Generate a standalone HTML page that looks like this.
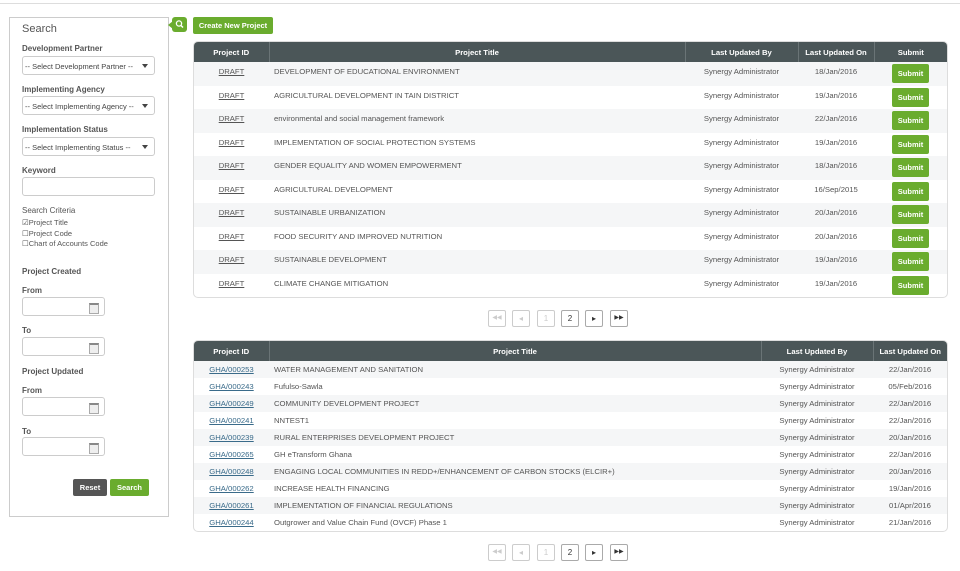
<!DOCTYPE html>
<html><head><meta charset="utf-8"><style>
*{box-sizing:border-box;margin:0;padding:0}
body{width:960px;height:571px;background:#fff;font-family:"Liberation Sans",Arial,sans-serif;color:#444;position:relative;overflow:hidden;font-size:8px}
.a{position:absolute}
.topline{left:0;top:3px;width:960px;height:1px;background:#ddd}
.panel{left:9px;top:17px;width:160px;height:500px;border:1px solid #ccc}
.lbl{font-weight:bold;font-size:8px;color:#555}
.sel{width:133px;height:19px;border:1px solid #ccc;border-radius:3px;font-size:7.5px;padding:5px 0 0 2px;color:#444}
.sel:after{content:"";position:absolute;right:6px;top:7px;border-left:3px solid transparent;border-right:3px solid transparent;border-top:4px solid #444}
.inp{width:133px;height:19px;border:1px solid #ccc;border-radius:3px}
.dt{width:83px;height:19px;border:1px solid #ccc;border-radius:3px}
.dt:after{content:"";position:absolute;right:5px;top:5px;width:8px;height:8px;border:1px solid #aaa;border-top:2px solid #888;background:#eee}
.btn{color:#fff;font-weight:bold;font-size:7.5px;text-align:center;border-radius:2px}
.g{background:#6aac2e}
table{border-collapse:collapse;width:100%;font-size:7.7px}
th{background:#4b5658;color:#fff;font-weight:bold;height:20px;border-right:1px solid #6a7476}
th:last-child{border-right:none}
td{color:#555}
tr:nth-child(even) td{background:#f5f6f7}
.t1 td{height:23.5px}
.t1 td span.x{position:relative;top:-2px}
.t2 td{height:17px}
.tb{left:193px;width:755px;border:1px solid #ddd;border-radius:5px;overflow:hidden}
u{color:#555}
.t2 u{color:#3a6b8a}
.sb{display:inline-block;background:#6aac2e;color:#fff;font-weight:bold;font-size:7.5px;padding:5px 0;width:37px;text-align:center;border-radius:2px}
.pg{width:18px;height:17px;border:1px solid #ccc;border-radius:2px;font-size:8px;text-align:center;line-height:15px;color:#ccc}
.pg.on{color:#333;border-color:#aaa}
</style></head><body>
<div class="a topline"></div>
<div class="a panel"></div>
<div class="a" style="left:22px;top:23px;font-size:11px;color:#555">Search</div>
<div class="a lbl" style="left:22px;top:44px">Development Partner</div>
<div class="a sel" style="left:22px;top:56px">-- Select Development Partner --</div>
<div class="a lbl" style="left:22px;top:85px">Implementing Agency</div>
<div class="a sel" style="left:22px;top:96px">-- Select Implementing Agency --</div>
<div class="a lbl" style="left:22px;top:125px">Implementation Status</div>
<div class="a sel" style="left:22px;top:137px">-- Select Implementing Status --</div>
<div class="a lbl" style="left:22px;top:166px">Keyword</div>
<div class="a inp" style="left:22px;top:177px"></div>
<div class="a" style="left:22px;top:206px;font-size:8px;color:#555">Search Criteria</div>
<div class="a" style="left:22px;top:218px;font-size:7.5px;line-height:10.5px;color:#555">☑Project Title<br>☐Project Code<br>☐Chart of Accounts Code</div>
<div class="a lbl" style="left:22px;top:267px">Project Created</div>
<div class="a lbl" style="left:22px;top:286px">From</div>
<div class="a dt" style="left:22px;top:297px"></div>
<div class="a lbl" style="left:22px;top:326px">To</div>
<div class="a dt" style="left:22px;top:337px"></div>
<div class="a lbl" style="left:22px;top:367px">Project Updated</div>
<div class="a lbl" style="left:22px;top:386px">From</div>
<div class="a dt" style="left:22px;top:397px"></div>
<div class="a lbl" style="left:22px;top:427px">To</div>
<div class="a dt" style="left:22px;top:437px"></div>
<div class="a btn" style="left:73px;top:479px;width:34px;height:17px;line-height:17px;background:#555">Reset</div>
<div class="a btn g" style="left:110px;top:479px;width:39px;height:17px;line-height:17px">Search</div>
<div class="a g" style="left:172px;top:17px;width:15px;height:15px;border-radius:3px"><svg width="15" height="15" viewBox="0 0 15 15"><circle cx="7" cy="6.5" r="2.6" fill="none" stroke="#fff" stroke-width="1.3"/><line x1="8.9" y1="8.4" x2="11" y2="10.5" stroke="#fff" stroke-width="1.5"/></svg></div>
<div class="a" style="left:168px;top:21px;border-top:4px solid transparent;border-bottom:4px solid transparent;border-right:5px solid #6aac2e"></div>
<div class="a btn g" style="left:193px;top:17px;width:80px;height:17px;line-height:17px">Create New Project</div>

<div class="a tb" style="top:41px">
<table class="t1">
<tr><th style="width:75px">Project ID</th><th style="width:416px">Project Title</th><th style="width:113px">Last Updated By</th><th style="width:76px">Last Updated On</th><th>Submit</th></tr>
<tr><td align=center><span class="x"><u>DRAFT</u></span></td><td style="padding-left:5px"><span class="x">DEVELOPMENT OF EDUCATIONAL ENVIRONMENT</span></td><td align=center><span class="x">Synergy Administrator</span></td><td align=center><span class="x">18/Jan/2016</span></td><td align=center><span class="sb">Submit</span></td></tr>
<tr><td align=center><span class="x"><u>DRAFT</u></span></td><td style="padding-left:5px"><span class="x">AGRICULTURAL DEVELOPMENT IN TAIN DISTRICT</span></td><td align=center><span class="x">Synergy Administrator</span></td><td align=center><span class="x">19/Jan/2016</span></td><td align=center><span class="sb">Submit</span></td></tr>
<tr><td align=center><span class="x"><u>DRAFT</u></span></td><td style="padding-left:5px"><span class="x">environmental and social management framework</span></td><td align=center><span class="x">Synergy Administrator</span></td><td align=center><span class="x">22/Jan/2016</span></td><td align=center><span class="sb">Submit</span></td></tr>
<tr><td align=center><span class="x"><u>DRAFT</u></span></td><td style="padding-left:5px"><span class="x">IMPLEMENTATION OF SOCIAL PROTECTION SYSTEMS</span></td><td align=center><span class="x">Synergy Administrator</span></td><td align=center><span class="x">19/Jan/2016</span></td><td align=center><span class="sb">Submit</span></td></tr>
<tr><td align=center><span class="x"><u>DRAFT</u></span></td><td style="padding-left:5px"><span class="x">GENDER EQUALITY AND WOMEN EMPOWERMENT</span></td><td align=center><span class="x">Synergy Administrator</span></td><td align=center><span class="x">18/Jan/2016</span></td><td align=center><span class="sb">Submit</span></td></tr>
<tr><td align=center><span class="x"><u>DRAFT</u></span></td><td style="padding-left:5px"><span class="x">AGRICULTURAL DEVELOPMENT</span></td><td align=center><span class="x">Synergy Administrator</span></td><td align=center><span class="x">16/Sep/2015</span></td><td align=center><span class="sb">Submit</span></td></tr>
<tr><td align=center><span class="x"><u>DRAFT</u></span></td><td style="padding-left:5px"><span class="x">SUSTAINABLE URBANIZATION</span></td><td align=center><span class="x">Synergy Administrator</span></td><td align=center><span class="x">20/Jan/2016</span></td><td align=center><span class="sb">Submit</span></td></tr>
<tr><td align=center><span class="x"><u>DRAFT</u></span></td><td style="padding-left:5px"><span class="x">FOOD SECURITY AND IMPROVED NUTRITION</span></td><td align=center><span class="x">Synergy Administrator</span></td><td align=center><span class="x">20/Jan/2016</span></td><td align=center><span class="sb">Submit</span></td></tr>
<tr><td align=center><span class="x"><u>DRAFT</u></span></td><td style="padding-left:5px"><span class="x">SUSTAINABLE DEVELOPMENT</span></td><td align=center><span class="x">Synergy Administrator</span></td><td align=center><span class="x">19/Jan/2016</span></td><td align=center><span class="sb">Submit</span></td></tr>
<tr><td align=center><span class="x"><u>DRAFT</u></span></td><td style="padding-left:5px"><span class="x">CLIMATE CHANGE MITIGATION</span></td><td align=center><span class="x">Synergy Administrator</span></td><td align=center><span class="x">19/Jan/2016</span></td><td align=center><span class="sb">Submit</span></td></tr>
</table></div>

<div class="a pg" style="left:488px;top:310px;font-size:6px">&#9664;&#9664;</div>
<div class="a pg" style="left:512px;top:310px">&#9666;</div>
<div class="a pg" style="left:537px;top:310px">1</div>
<div class="a pg on" style="left:561px;top:310px">2</div>
<div class="a pg on" style="left:585px;top:310px">&#9656;</div>
<div class="a pg on" style="left:610px;top:310px;font-size:6px">&#9654;&#9654;</div>

<div class="a tb" style="top:340px">
<table class="t2">
<tr><th style="width:75px">Project ID</th><th style="width:492px">Project Title</th><th style="width:112px">Last Updated By</th><th>Last Updated On</th></tr>
<tr><td align=center><u>GHA/000253</u></td><td style="padding-left:5px">WATER MANAGEMENT AND SANITATION</td><td align=center>Synergy Administrator</td><td align=center>22/Jan/2016</td></tr>
<tr><td align=center><u>GHA/000243</u></td><td style="padding-left:5px">Fufulso-Sawla</td><td align=center>Synergy Administrator</td><td align=center>05/Feb/2016</td></tr>
<tr><td align=center><u>GHA/000249</u></td><td style="padding-left:5px">COMMUNITY DEVELOPMENT PROJECT</td><td align=center>Synergy Administrator</td><td align=center>22/Jan/2016</td></tr>
<tr><td align=center><u>GHA/000241</u></td><td style="padding-left:5px">NNTEST1</td><td align=center>Synergy Administrator</td><td align=center>22/Jan/2016</td></tr>
<tr><td align=center><u>GHA/000239</u></td><td style="padding-left:5px">RURAL ENTERPRISES DEVELOPMENT PROJECT</td><td align=center>Synergy Administrator</td><td align=center>20/Jan/2016</td></tr>
<tr><td align=center><u>GHA/000265</u></td><td style="padding-left:5px">GH eTransform Ghana</td><td align=center>Synergy Administrator</td><td align=center>22/Jan/2016</td></tr>
<tr><td align=center><u>GHA/000248</u></td><td style="padding-left:5px">ENGAGING LOCAL COMMUNITIES IN REDD+/ENHANCEMENT OF CARBON STOCKS (ELCIR+)</td><td align=center>Synergy Administrator</td><td align=center>20/Jan/2016</td></tr>
<tr><td align=center><u>GHA/000262</u></td><td style="padding-left:5px">INCREASE HEALTH FINANCING</td><td align=center>Synergy Administrator</td><td align=center>19/Jan/2016</td></tr>
<tr><td align=center><u>GHA/000261</u></td><td style="padding-left:5px">IMPLEMENTATION OF FINANCIAL REGULATIONS</td><td align=center>Synergy Administrator</td><td align=center>01/Apr/2016</td></tr>
<tr><td align=center><u>GHA/000244</u></td><td style="padding-left:5px">Outgrower and Value Chain Fund (OVCF) Phase 1</td><td align=center>Synergy Administrator</td><td align=center>21/Jan/2016</td></tr>
</table></div>

<div class="a pg" style="left:488px;top:544px;font-size:6px">&#9664;&#9664;</div>
<div class="a pg" style="left:512px;top:544px">&#9666;</div>
<div class="a pg" style="left:537px;top:544px">1</div>
<div class="a pg on" style="left:561px;top:544px">2</div>
<div class="a pg on" style="left:585px;top:544px">&#9656;</div>
<div class="a pg on" style="left:610px;top:544px;font-size:6px">&#9654;&#9654;</div>
</body></html>
